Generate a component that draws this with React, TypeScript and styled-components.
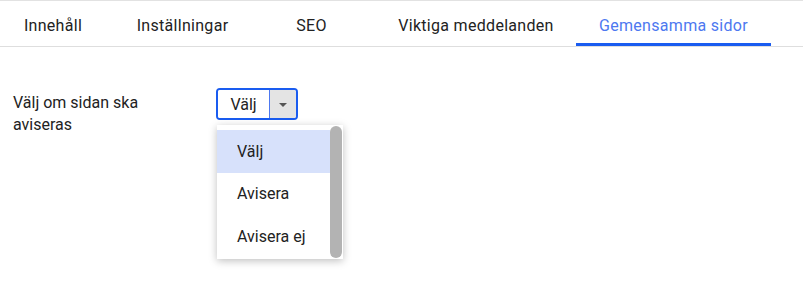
import React, { useState } from "react";
import styled, { createGlobalStyle } from "styled-components";

const tabs = [
  { label: "Innehåll", width: 130 },
  { label: "Inställningar", width: 129 },
  { label: "SEO", width: 129 },
  { label: "Viktiga meddelanden", width: 200 },
  { label: "Gemensamma sidor", width: 195 },
];
const options = ["Välj", "Avisera", "Avisera ej"];

export default function App() {
  const [active] = useState(4);
  const [selected] = useState(0);

  return (
    <>
      <GlobalStyle />
      <Page>
        <TabBar>
          {tabs.map((t, i) => (
            <Tab key={t.label} $active={i === active} $width={t.width}>
              {t.label}
            </Tab>
          ))}
        </TabBar>
        <FormRow>
          <Label>Välj om sidan ska aviseras</Label>
          <SelectWrap>
            <SelectBox>
              <SelectValue>Välj</SelectValue>
              <ArrowButton>
                <Caret />
              </ArrowButton>
            </SelectBox>
            <Menu>
              <MenuList>
                {options.map((o, i) => (
                  <MenuItem key={o} $selected={i === selected}>
                    {o}
                  </MenuItem>
                ))}
              </MenuList>
              <ScrollTrack>
                <ScrollThumb />
              </ScrollTrack>
            </Menu>
          </SelectWrap>
        </FormRow>
      </Page>
    </>
  );
}

const GlobalStyle = createGlobalStyle`
  body {
    margin: 0;
    background: #fff;
    font-family: Roboto, "Liberation Sans", sans-serif;
    color: #222;
  }
`;

const Page = styled.div`
  width: 803px;
  height: 293px;
  border-top: 1px solid #e2e2e2;
  overflow: hidden;
`;

const TabBar = styled.div`
  display: flex;
  height: 45px;
  margin-left: -12px;
  border-bottom: 1px solid #dedede;
`;

const Tab = styled.div<{ $active: boolean; $width: number }>`
  box-sizing: border-box;
  width: ${(p) => p.$width}px;
  flex: none;
  display: flex;
  align-items: center;
  justify-content: center;
  padding-top: 6px;
  font-size: 16px;
  letter-spacing: 0.3px;
  color: ${(p) => (p.$active ? "#4d78f0" : "#222")};
  border-bottom: 3px solid ${(p) => (p.$active ? "#1a5cf0" : "transparent")};
  white-space: nowrap;
`;

const FormRow = styled.div`
  display: flex;
  padding: 41px 0 0 13px;
`;

const Label = styled.div`
  width: 170px;
  margin-right: 33px;
  font-size: 16px;
  line-height: 22px;
  padding-top: 4px;
  color: #222;
`;

const SelectWrap = styled.div`
  position: relative;
`;

const SelectBox = styled.div`
  box-sizing: border-box;
  display: flex;
  width: 82px;
  height: 32px;
  border: 2px solid #1a5cf0;
  border-radius: 4px;
  overflow: hidden;
`;

const SelectValue = styled.div`
  flex: 1;
  display: flex;
  align-items: center;
  justify-content: center;
  font-size: 16px;
  color: #222;
  background: #fff;
  border-right: 1px solid #4d78f0;
`;

const ArrowButton = styled.div`
  width: 26px;
  display: flex;
  align-items: center;
  justify-content: center;
  background: #e4e4e4;
`;

const Caret = styled.div`
  width: 0;
  height: 0;
  border-left: 4px solid transparent;
  border-right: 4px solid transparent;
  border-top: 4px solid #555;
  margin-top: 1px;
`;

const Menu = styled.div`
  position: absolute;
  top: 37px;
  left: 1px;
  width: 126px;
  height: 134px;
  background: #fff;
  box-shadow: 0 2px 8px rgba(0, 0, 0, 0.25);
  display: flex;
`;

const MenuList = styled.div`
  flex: 1;
  padding-top: 5px;
`;

const MenuItem = styled.div<{ $selected: boolean }>`
  height: 42.5px;
  display: flex;
  align-items: center;
  padding-left: 20px;
  font-size: 16px;
  color: #222;
  background: ${(p) => (p.$selected ? "#d7e1fb" : "transparent")};
`;

const ScrollTrack = styled.div`
  width: 13px;
  padding: 1px 1px 1px 0;
  box-sizing: border-box;
`;

const ScrollThumb = styled.div`
  height: 100%;
  background: #b3b3b3;
  border-radius: 6px;
`;
